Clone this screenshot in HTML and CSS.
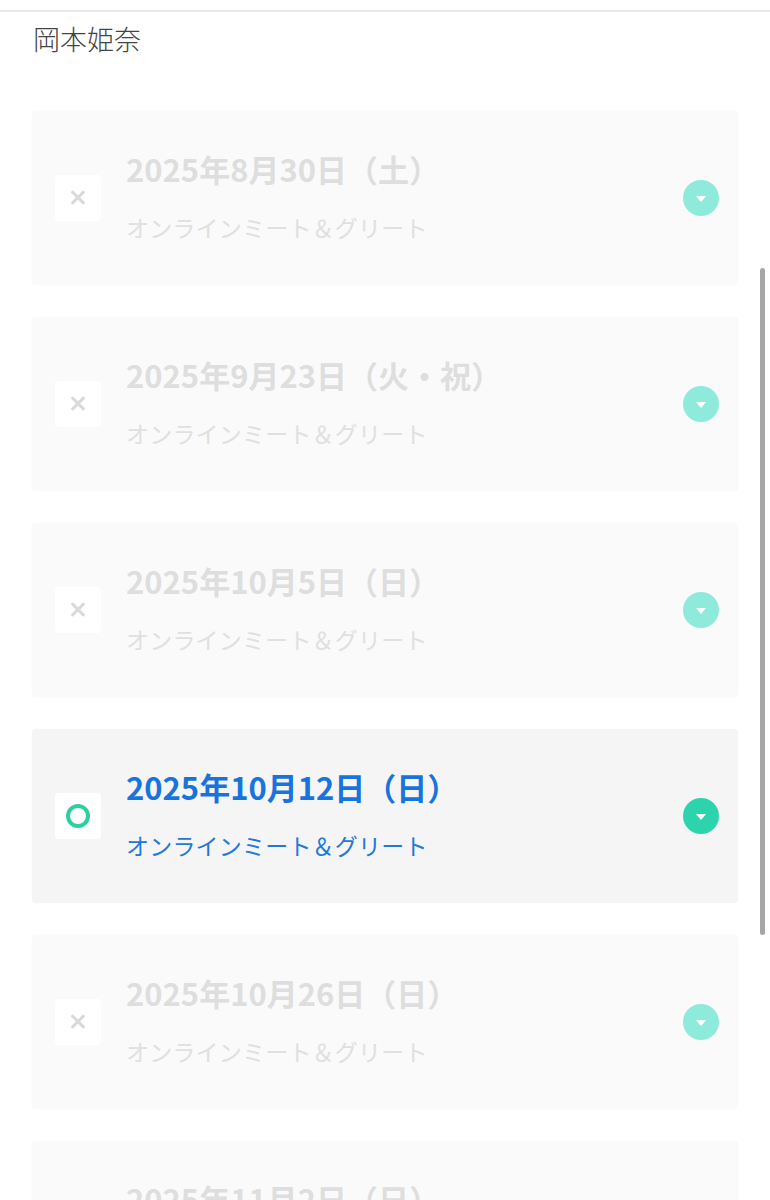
FILE: index.html
```html
<!doctype html>
<html lang="ja">
<head>
<meta charset="utf-8">
<title>岡本姫奈</title>
<link rel="stylesheet" href="styles.css">
</head>
<body>
<div class="topbar"></div>
<div class="member">岡本姫奈</div>

<div class="slots">
	<div class="slot disabled">
		<div class="check"><span class="cross"></span></div>
		<div class="info">
			<div class="date">2025年8月30日（土）</div>
			<div class="kind">オンラインミート＆グリート</div>
		</div>
		<div class="toggle"><span class="tri"></span></div>
	</div>

	<div class="slot disabled">
		<div class="check"><span class="cross"></span></div>
		<div class="info">
			<div class="date">2025年9月23日（火・祝）</div>
			<div class="kind">オンラインミート＆グリート</div>
		</div>
		<div class="toggle"><span class="tri"></span></div>
	</div>

	<div class="slot disabled">
		<div class="check"><span class="cross"></span></div>
		<div class="info">
			<div class="date">2025年10月5日（日）</div>
			<div class="kind">オンラインミート＆グリート</div>
		</div>
		<div class="toggle"><span class="tri"></span></div>
	</div>

	<div class="slot active">
		<div class="check"><span class="ring"></span></div>
		<div class="info">
			<div class="date">2025年10月12日（日）</div>
			<div class="kind">オンラインミート＆グリート</div>
		</div>
		<div class="toggle"><span class="tri"></span></div>
	</div>

	<div class="slot disabled">
		<div class="check"><span class="cross"></span></div>
		<div class="info">
			<div class="date">2025年10月26日（日）</div>
			<div class="kind">オンラインミート＆グリート</div>
		</div>
		<div class="toggle"><span class="tri"></span></div>
	</div>

	<div class="slot disabled">
		<div class="check"><span class="cross"></span></div>
		<div class="info">
			<div class="date">2025年11月2日（日）</div>
			<div class="kind">オンラインミート＆グリート</div>
		</div>
		<div class="toggle"><span class="tri"></span></div>
	</div>
</div>

<div class="scrollbar"></div>
</body>
</html>
```

FILE: styles.css
```css
html, body {
	margin: 0;
	padding: 0;
	height: 1200px;
	overflow: hidden;
	background-color: rgb(255,255,255);
	font-family: "Noto Sans CJK JP", "Noto Sans", sans-serif;
}

.topbar {
	height: 10px;
	border-bottom: 2px solid rgb(232,232,232);
}

.member {
	margin-top: 9px;
	padding-left: 33px;
	font-size: 27px;
	line-height: 36px;
	font-weight: 300;
	color: rgb(68,68,68);
}

.slots {
	display: flex;
	flex-direction: column;
	gap: 32px;
	margin-top: 54px;
	padding: 0px 32px;
}

.slot {
	display: flex;
	align-items: center;
	height: 174px;
	padding: 0px 19px 0px 23px;
	border-radius: 4px;
	background-color: rgb(250,250,250);
	box-shadow: 0px 0px 2px rgba(0,0,0,0.03);
}

.slot.active {
	background-color: rgb(245,245,245);
}

.check {
	display: flex;
	justify-content: center;
	align-items: center;
	flex: none;
	width: 46px;
	height: 46px;
	margin-right: 25px;
	border-radius: 4px;
	background-color: rgb(255,255,255);
}

.cross {
	position: relative;
	width: 20px;
	height: 20px;
}

.cross::before,
.cross::after {
	content: "";
	position: absolute;
	left: 1px;
	top: 8px;
	width: 18px;
	height: 3px;
	border-radius: 1px;
	background-color: rgb(218,218,218);
	transform: rotate(45deg);
}

.cross::after {
	transform: rotate(-45deg);
}

.ring {
	width: 16px;
	height: 16px;
	border: 4px solid rgb(43,208,160);
	border-radius: 50%;
}

.info {
	flex: 1;
	display: flex;
	flex-direction: column;
	gap: 22px;
	margin-top: -4px;
}

.date {
	font-size: 31px;
	line-height: 40px;
	font-weight: bold;
	color: rgb(222,222,222);
}

.kind {
	font-size: 23px;
	line-height: 32px;
	letter-spacing: 0.2px;
	color: rgb(224,224,224);
}

.active .date {
	color: rgb(25,115,220);
}

.active .kind {
	color: rgb(36,120,214);
}

.toggle {
	display: flex;
	justify-content: center;
	align-items: center;
	flex: none;
	width: 36px;
	height: 36px;
	border-radius: 50%;
	background-color: rgb(142,234,218);
}

.active .toggle {
	background-color: rgb(44,212,174);
}

.tri {
	width: 0px;
	height: 0px;
	margin-top: 2px;
	border-left: 5px solid transparent;
	border-right: 5px solid transparent;
	border-top: 6px solid rgb(255,255,255);
}

.scrollbar {
	position: fixed;
	top: 268px;
	left: 760px;
	width: 5px;
	height: 667px;
	border-radius: 3px;
	background-color: rgb(166,166,166);
}
```
